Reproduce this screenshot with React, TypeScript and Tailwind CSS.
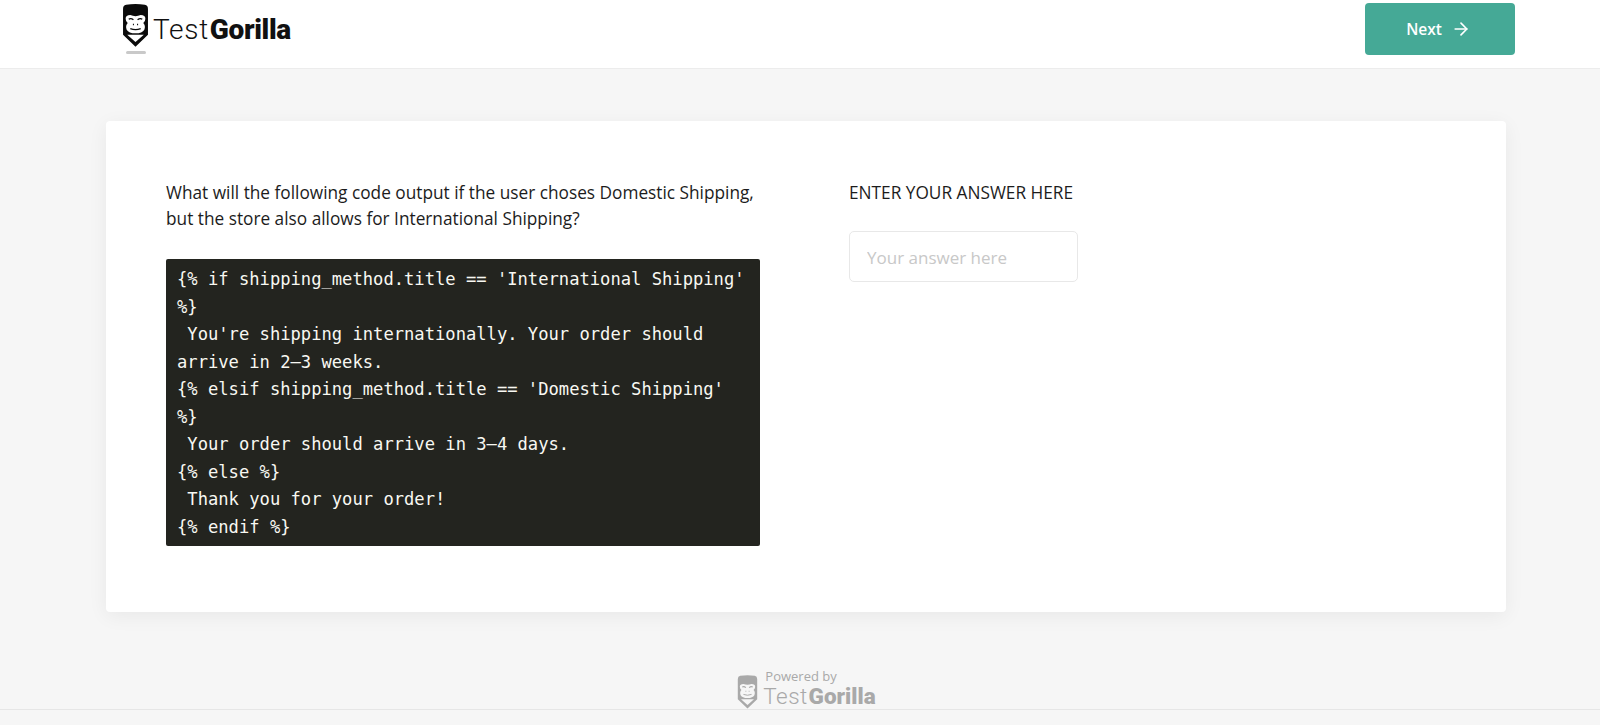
import { ArrowRight } from "lucide-react";

const codeLines = [
  "{% if shipping_method.title == 'International Shipping' %}",
  " You're shipping internationally. Your order should arrive in 2–3 weeks.",
  "{% elsif shipping_method.title == 'Domestic Shipping' %}",
  " Your order should arrive in 3–4 days.",
  "{% else %}",
  " Thank you for your order!",
  "{% endif %}",
];

// gorilla head inside a pencil shape
const GorillaMark = ({ dark, face, className }: { dark: string; face: string; className: string }) => (
  <svg viewBox="0 0 26 42" className={className}>
    <path d="M4 1 Q13 -0.500 22 1 Q25 1.500 25 5 V30 L13 41.500 L1 30 V5 Q1 1.500 4 1 Z" fill={dark} />
    <path d="M5 30 L13 37 L21 30 Z" fill={face} />
    <path d="M8 11 Q13 13 18 11 Q22.500 11 22.500 14.500 Q22.500 17 20.500 18.500 Q23 21 21.500 25 Q19.500 28.500 13 28.500 Q6.500 28.500 4.500 25 Q3 21 5.500 18.500 Q3.500 17 3.500 14.500 Q3.500 11 8 11 Z" fill={face} />
    <path d="M6.500 15 Q8.500 13.500 11 15.500 M15 15.500 Q17.500 13.500 19.500 15" stroke={dark} strokeWidth="1.300" fill="none" />
    <path d="M10.500 20 H11.500 M14.500 20 H15.500" stroke={dark} strokeWidth="1.300" />
    <path d="M8 24 Q13 26 18 24" stroke={dark} strokeWidth="1.200" fill="none" />
  </svg>
);

export default function App() {
  return (
    <div className="h-[725px] overflow-hidden bg-[#f6f6f6] font-['Open_Sans',sans-serif] flex flex-col">
      {/* header */}
      <header className="h-[69px] shrink-0 bg-white border-b border-[#ececec] flex items-start justify-between pl-[122px] pr-[85px] pt-[3px]">
        <div className="flex items-start gap-[4px]">
          <div className="flex flex-col items-center">
            <GorillaMark dark="#0b0b0b" face="#ffffff" className="w-[27px] h-[45px]" />
            <div className="w-[20px] h-[3px] rounded-full bg-[#c9c9c9] blur-[0.5px] mt-[3px]" />
          </div>
          <div className="mt-[11px] text-[28px] leading-[32px] text-[#111] font-['Roboto',sans-serif] flex">
            <span className="font-light tracking-[0.7px]">Test</span>
            <span className="font-black ml-[1px] tracking-[-0.35px]">Gorilla</span>
          </div>
        </div>
        <button className="w-[150px] h-[52px] pt-[2px] pr-[3px] rounded-[4px] bg-[#45a996] text-white text-[15.500px] font-semibold flex items-center justify-center gap-[9px]">
          Next
          <ArrowRight className="w-[20px] h-[20px] -mt-[2px]" strokeWidth={2} />
        </button>
      </header>

      {/* question card */}
      <main className="mt-[52px] ml-[106px] w-[1400px] h-[491px] shrink-0 bg-white rounded-[4px] shadow-[0_4px_20px_rgba(0,0,0,0.06)] flex pl-[60px] pt-[59px]">
        <section className="w-[594px] shrink-0">
          <p className="text-[17.250px] leading-[25.500px] text-[#1c1c1c] w-[600px] whitespace-nowrap">
            What will the following code output if the user choses Domestic Shipping,
            <br />
            but the store also allows for International Shipping?
          </p>
          <pre className="mt-[28px] h-[287px] rounded-[2px] bg-[#23241f] text-[#f8f8f2] font-['DejaVu_Sans_Mono',monospace] text-[17.150px] leading-[27.500px] px-[11px] pt-[7px] whitespace-pre-wrap break-words">
            {codeLines.join("\n")}
          </pre>
        </section>
        <section className="ml-[89px] w-[229px]">
          <div className="text-[17.250px] leading-[25.500px] text-[#1c1c1c] whitespace-nowrap">ENTER YOUR ANSWER HERE</div>
          <input
            placeholder="Your answer here"
            className="mt-[25px] w-[229px] h-[51px] rounded-[5px] border border-[#e8e8e8] bg-white px-[17px] pt-[2px] text-[17px] outline-none placeholder:text-[#c8c8c8]"
          />
        </section>
      </main>

      {/* powered by */}
      <footer className="mt-[62px] h-[36px] flex justify-center border-b border-[#e6e6e6] shrink-0 pl-[13px]">
        <div className="flex items-start gap-[5px]">
          <GorillaMark dark="#a9a9a9" face="#f6f6f6" className="w-[21px] h-[36px]" />
          <div className="flex flex-col -mt-[3px]">
            <span className="text-[13px] leading-[11px] text-[#a9a9a9] pl-[2px]">Powered by</span>
            <div className="mt-[1px] text-[22.500px] leading-[26px] text-[#a9a9a9] font-['Roboto',sans-serif] flex">
              <span className="font-light tracking-[0.4px]">Test</span>
              <span className="font-black ml-[1px]">Gorilla</span>
            </div>
          </div>
        </div>
      </footer>
    </div>
  );
}
